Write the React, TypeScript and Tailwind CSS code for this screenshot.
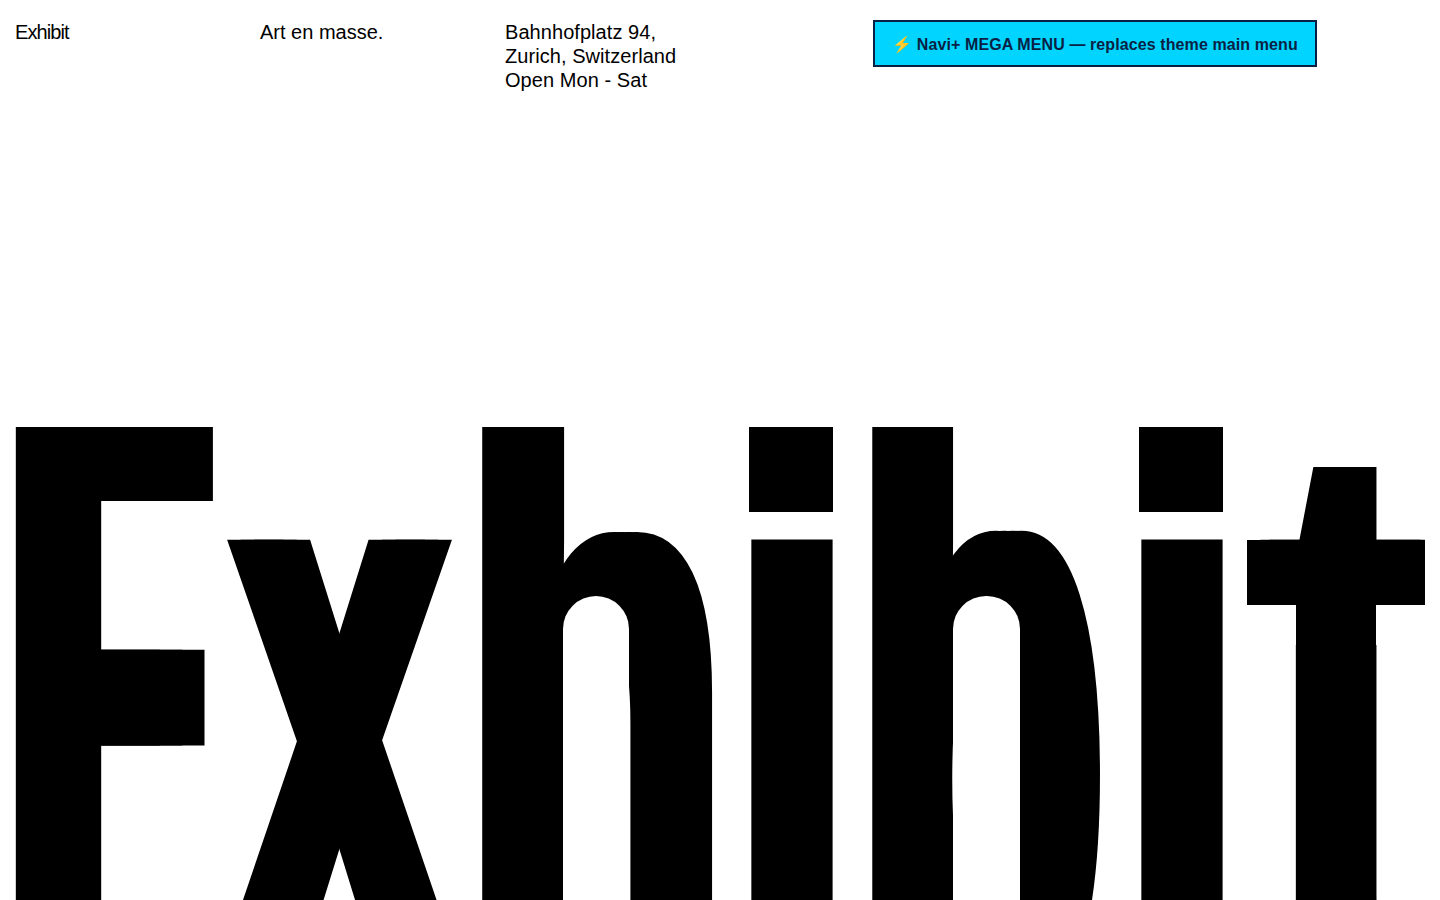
export default function App() {
  return (
    <div className="h-[900px] overflow-hidden bg-white text-black font-['Liberation_Sans',Arial,sans-serif]">
      <header className="flex items-start h-[427px] pt-5 pl-[15px]">
        <div className="w-[245px] text-[20px] leading-6 tracking-[-0.9px]">Exhibit</div>
        <div className="w-[245px] text-[20px] leading-6">Art en masse.</div>
        <div className="w-[368px] text-[20px] leading-6 tracking-[0.06px]">
          <div>Bahnhofplatz 94,</div>
          <div>Zurich, Switzerland</div>
          <div>Open Mon - Sat</div>
        </div>
        <button className="w-[444px] h-[47px] pt-[2px] bg-[#00d4ff] border-2 border-[#0a1f44] text-[#0a1f44] text-[16px] tracking-[0.1px] font-bold flex items-center justify-center">
          ⚡ Navi+ MEGA MENU — replaces theme main menu
        </button>
      </header>
      <h1 className="flex h-[473px] overflow-hidden pl-[15px] font-bold whitespace-nowrap">
        <span className="block w-[197px] shrink-0">
          <span className="block origin-top-left scale-x-[0.3272] ml-[-18px] mt-[-158px] text-[860px] leading-none [text-shadow:69px_0_0_#000,137px_0_0_#000]">E</span>
        </span>
        <span className="block ml-[16px] w-[224px] shrink-0">
          <span className="block origin-top-left scale-x-[0.48] ml-[-7px] mt-[-139px] text-[790px] leading-none [text-shadow:28px_0_0_#000,56px_0_0_#000]">x</span>
        </span>
        <span className="relative block ml-[30px] w-[229px] shrink-0">
          <span className="block origin-top-left scale-x-[0.548] ml-[-30px] mt-[-139px] text-[790px] leading-none [text-shadow:14px_0_0_#000,27px_0_0_#000,41px_0_0_#000]">h</span>
          <span className="absolute left-[81px] top-[169px] bottom-0 w-[66px] rounded-t-[33px] bg-white" />
        </span>
        <span className="relative block ml-[40px] w-[81px] shrink-0">
          <span className="block origin-top-left scale-x-[0.658] ml-[-41px] mt-[-174px] text-[900px] leading-none">i</span>
          <span className="absolute left-[-2px] top-0 w-[84px] h-[85px] bg-black" />
        </span>
        <span className="relative block ml-[40px] w-[229px] shrink-0">
          <span className="block origin-top-left scale-x-[0.45] ml-[-28px] mt-[-174px] text-[900px] leading-none [text-shadow:19px_0_0_#000,38px_0_0_#000,56px_0_0_#000]">b</span>
          <span className="absolute left-[81px] top-[169px] bottom-0 w-[67px] rounded-t-[33px] bg-white" />
        </span>
        <span className="relative block ml-[40px] w-[81px] shrink-0">
          <span className="block origin-top-left scale-x-[0.658] ml-[-41px] mt-[-174px] text-[900px] leading-none">i</span>
          <span className="absolute left-[-2px] top-0 w-[84px] h-[85px] bg-black" />
        </span>
        <span className="relative block ml-[25px] w-[178px] shrink-0 mt-[40px] overflow-hidden">
          <span className="block origin-top-left scale-x-[0.551] ml-[7px] mt-[-233px] text-[960px] leading-none [text-shadow:16px_0_0_#000]">t</span>
          <span className="absolute left-0 top-[73px] w-[178px] h-[65px] bg-black" />
          <span className="absolute left-0 top-[138px] w-[49px] h-[40px] bg-white" />
          <span className="absolute left-[129px] top-[138px] w-[49px] h-[40px] bg-white" />
        </span>
      </h1>
    </div>
  );
}
